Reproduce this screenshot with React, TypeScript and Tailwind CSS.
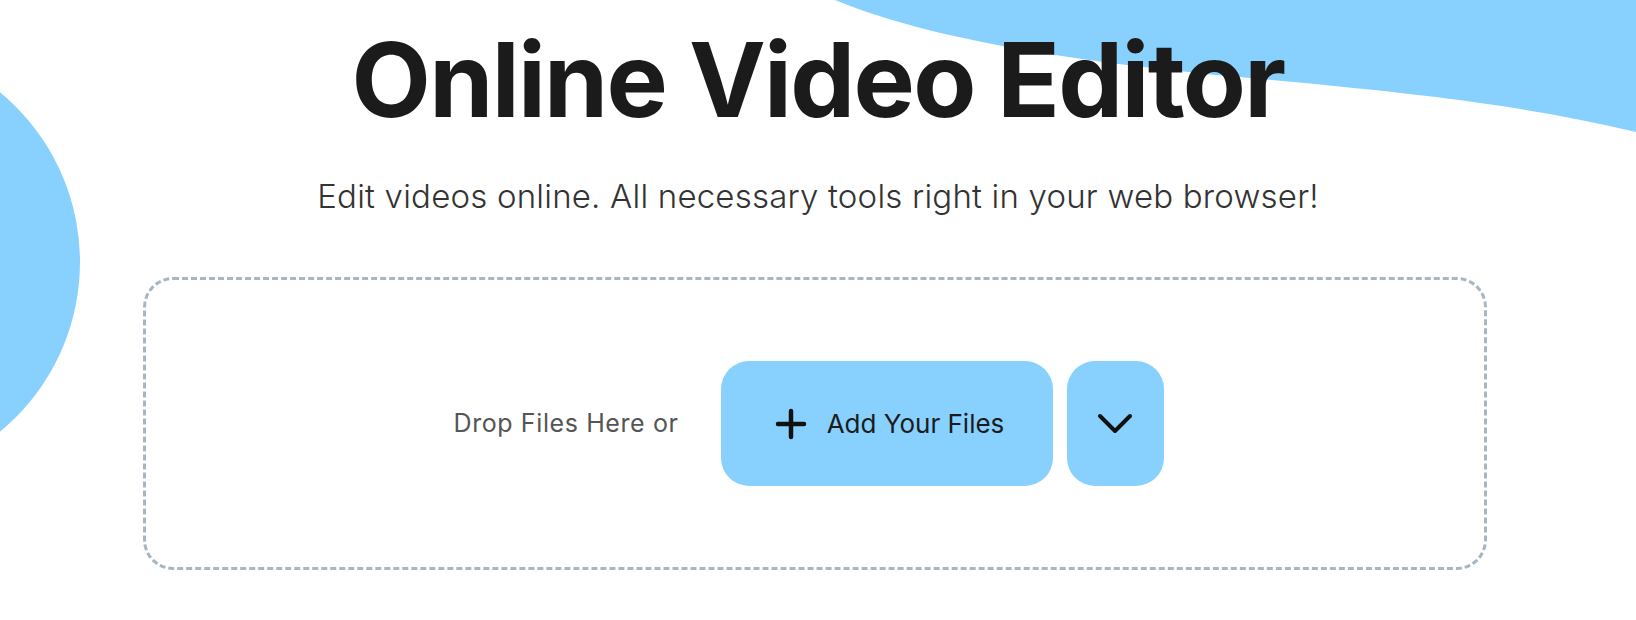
import React from 'react';

const BLUE = '#88d1fe';

const PlusIcon = () => (
  <svg width="32" height="32" viewBox="0 0 32 32" fill="none">
    <path d="M16 3v26M3 16h26" stroke="#111" strokeWidth="4.5" strokeLinecap="round" />
  </svg>
);

const ChevronIcon = () => (
  <svg width="36" height="22" viewBox="0 0 36 22" fill="none">
    <path d="M3 3l15 15L33 3" stroke="#111" strokeWidth="4" strokeLinecap="round" strokeLinejoin="round" />
  </svg>
);

// background shapes behind the hero
const Decorations = () => (
  <svg
    className="absolute inset-0 h-[620px] w-[1636px]"
    viewBox="0 0 1636 620"
    fill="none"
    aria-hidden="true"
  >
    <path
      d="M835 0 C920 35 1050 60 1250 78 C1400 92 1520 104 1636 132 L1636 0 Z"
      fill={BLUE}
    />
    <circle cx="-140" cy="262" r="220" fill={BLUE} />
  </svg>
);

export default function App() {
  return (
    <div
      className="relative min-h-[620px] w-full overflow-hidden bg-white"
      style={{ fontFamily: 'Inter, "Noto Sans", sans-serif' }}
    >
      <Decorations />
      <div className="relative flex flex-col items-center pt-[28px]">
        <h1 className="text-[103px] font-bold leading-none tracking-[-1.7px] text-[#1b1b1b]">
          Online Video Editor
        </h1>
        <p className="mt-[49px] text-[33px] font-light leading-none tracking-[0.2px] text-[#333]">
          Edit videos online. All necessary tools right in your web browser!
        </p>

        <div className="mr-[6px] mt-[64px] flex h-[293px] w-[1344px] items-center justify-center rounded-[30px] border-[3px] border-dashed border-[#a6b7c1]">
          <div className="mr-[13px] flex items-center">
            <span className="mr-[42px] text-[25px] tracking-[0.6px] text-[#555]">Drop Files Here or</span>
            <button className="flex h-[125px] w-[332px] items-center justify-center gap-[20px] rounded-[28px] bg-[#88d1fe] pl-[6px] text-[26px] text-[#1b1b1b]">
              <PlusIcon />
              <span>Add Your Files</span>
            </button>
            <button className="ml-[14px] flex h-[125px] w-[97px] items-center justify-center rounded-[28px] bg-[#88d1fe]">
              <ChevronIcon />
            </button>
          </div>
        </div>
      </div>
    </div>
  );
}
